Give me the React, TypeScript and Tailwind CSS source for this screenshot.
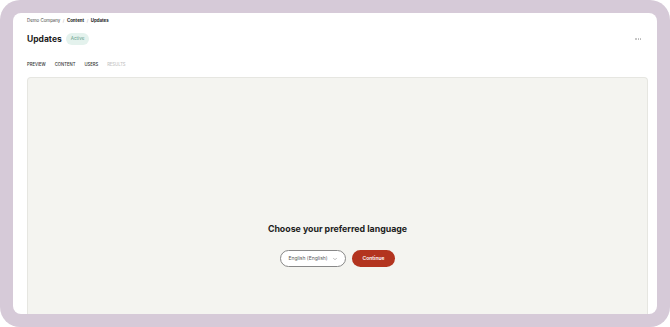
import { ChevronDown } from "lucide-react";

const tabs = [
  { label: "PREVIEW", muted: false },
  { label: "CONTENT", muted: false },
  { label: "USERS", muted: false },
  { label: "RESULTS", muted: true },
];

export default function App() {
  return (
    <div className="w-[670px] h-[327px] bg-white font-['Inter',sans-serif] text-[#1c1c1c]">
      <div className="w-full h-full bg-[#d6cad8] rounded-[20px] p-[13px]">
        <div className="w-full h-full bg-white rounded-[8px] overflow-hidden flex flex-col pl-[14px] pr-[9px]">
          {/* Breadcrumb */}
          <div className="flex items-center gap-[2.5px] text-[4.4px] leading-none mt-[6px] h-[4px]">
            <span className="text-[#444]">Demo Company</span>
            <span className="text-[#aaa]">/</span>
            <span className="font-bold">Content</span>
            <span className="text-[#aaa]">/</span>
            <span className="font-bold">Updates</span>
          </div>

          {/* Header */}
          <div className="flex items-center mt-[10px] h-[12px]">
            <h1 className="text-[8.5px] font-bold leading-none">Updates</h1>
            <span className="ml-[4px] px-[5px] h-[12px] flex items-center rounded-full bg-[#e4f2ed] text-[#5e9c88] text-[4.6px]">
              Active
            </span>
            <div className="ml-auto mr-[7px] flex gap-[1px]">
              <span className="w-[1.2px] h-[1.2px] rounded-full bg-[#b5b5b5]" />
              <span className="w-[1.2px] h-[1.2px] rounded-full bg-[#b5b5b5]" />
              <span className="w-[1.2px] h-[1.2px] rounded-full bg-[#b5b5b5]" />
            </div>
          </div>

          {/* Tabs */}
          <div className="flex gap-[9px] mt-[18px] text-[4.2px] leading-none font-medium">
            {tabs.map((t) => (
              <span key={t.label} className={t.muted ? "text-[#c4c4c4]" : "text-[#333]"}>
                {t.label}
              </span>
            ))}
          </div>

          {/* Preview panel */}
          <div className="mt-[10px] flex-1 bg-[#f4f4f0] border border-[#e6e6e1] border-b-0 rounded-t-[4px] flex flex-col items-center pt-[147px]">
            <h2 className="text-[8.8px] font-bold leading-none">Choose your preferred language</h2>
            <div className="flex items-center gap-[6px] mt-[16px]">
              <button className="w-[66px] h-[17px] rounded-full border border-[#888] bg-white flex items-center justify-center gap-[4px] text-[5px] text-[#555]">
                English (English)
                <ChevronDown className="w-[6px] h-[6px] text-[#777]" strokeWidth={2} />
              </button>
              <button className="w-[43px] h-[17px] rounded-full bg-[#b3341f] text-white text-[5px] font-semibold flex items-center justify-center">
                Continue
              </button>
            </div>
          </div>
        </div>
      </div>
    </div>
  );
}
